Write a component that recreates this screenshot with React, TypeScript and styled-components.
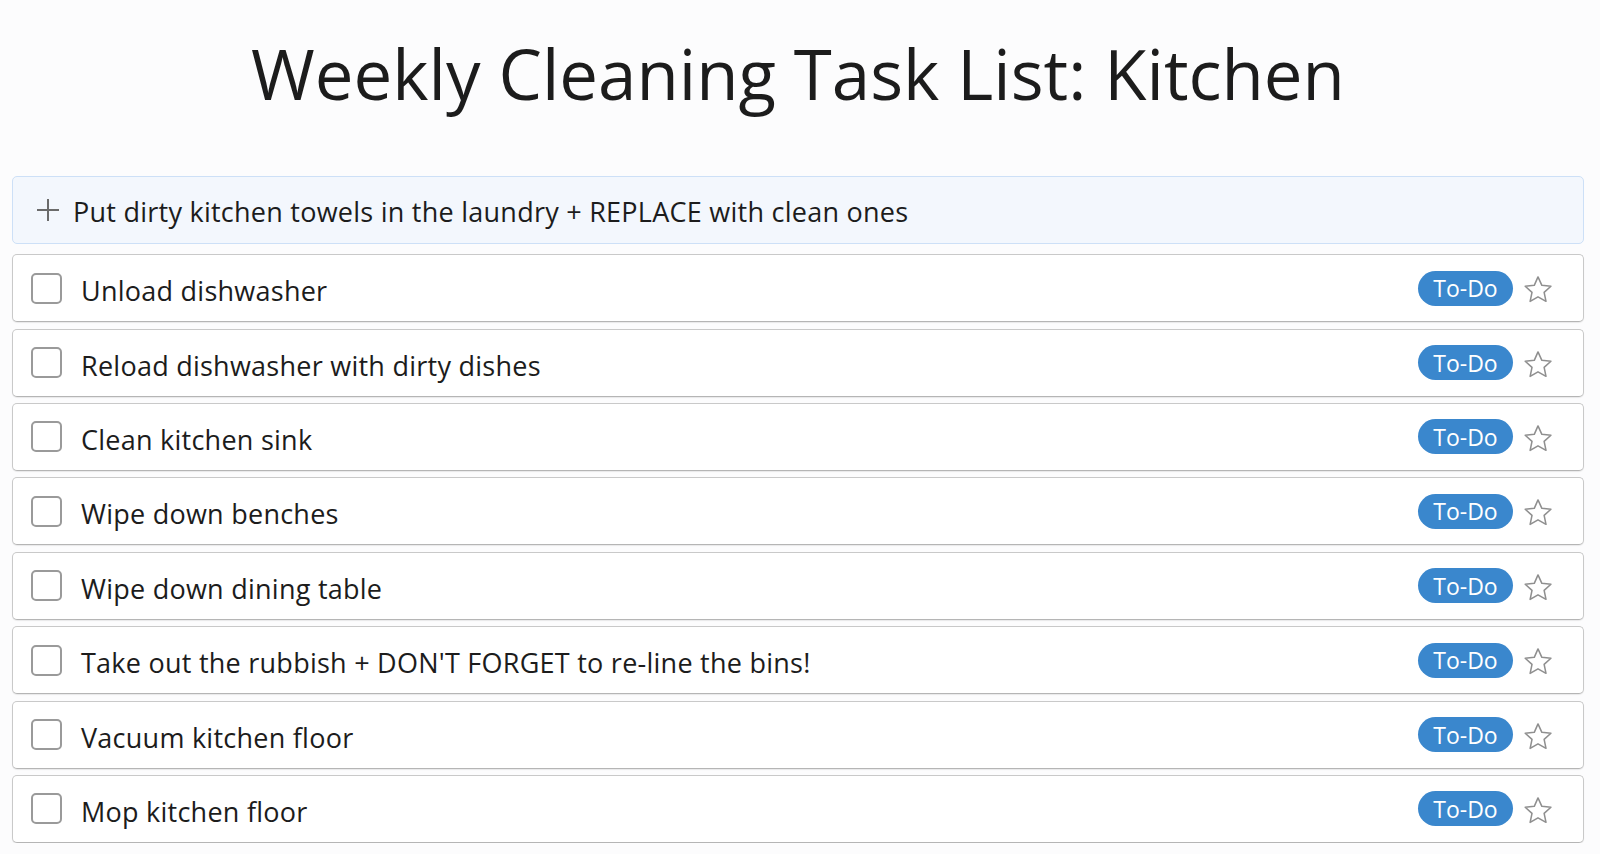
import { createGlobalStyle, styled } from 'styled-components';

const tasks = [
  'Unload dishwasher',
  'Reload dishwasher with dirty dishes',
  'Clean kitchen sink',
  'Wipe down benches',
  'Wipe down dining table',
  "Take out the rubbish + DON'T FORGET to re-line the bins!",
  'Vacuum kitchen floor',
  'Mop kitchen floor',
];

const GlobalStyle = createGlobalStyle`
  html, body {
    margin: 0;
    padding: 0;
    background: #fcfcfd;
    font-family: 'Open Sans', 'Noto Sans', sans-serif;
    color: #1f1f1f;
  }
`;

function PlusIcon() {
  return (
    <svg width="24" height="24" viewBox="0 0 24 24">
      <path d="M12 1v22M1 12h22" stroke="#6b6b6b" strokeWidth="2" fill="none" />
    </svg>
  );
}

function StarIcon() {
  return (
    <svg width="32" height="32" viewBox="0 0 24 24">
      <path
        d="M12 2.2l2.9 6.3 6.8.7-5.1 4.6 1.4 6.7L12 17.1l-5.9 3.4 1.4-6.7-5.1-4.6 6.8-.7z"
        stroke="#8f8f8f"
        strokeWidth="1.15"
        strokeLinejoin="round"
        fill="none"
      />
    </svg>
  );
}

function App() {
  return (
    <>
      <GlobalStyle />
      <Page>
        <Title>Weekly Cleaning Task List: Kitchen</Title>
        <List>
          <AddRow>
            <PlusIcon />
            <AddText>Put dirty kitchen towels in the laundry + REPLACE with clean ones</AddText>
          </AddRow>
          {tasks.map((task) => (
            <TaskRow key={task}>
              <Checkbox />
              <TaskText>{task}</TaskText>
              <Badge>To-Do</Badge>
              <StarButton>
                <StarIcon />
              </StarButton>
            </TaskRow>
          ))}
        </List>
      </Page>
    </>
  );
}

const Page = styled.div`
  padding: 32px 16px 0 12px;
`;

const Title = styled.h1`
  margin: 0 0 61px;
  font-size: 69px;
  font-weight: 400;
  line-height: 1.2;
  text-align: center;
  color: #1c1c1c;
`;

const List = styled.div`
  display: flex;
  flex-direction: column;
  gap: 6.4px;
`;

const AddRow = styled.div`
  box-sizing: border-box;
  height: 68px;
  margin-bottom: 4px;
  display: flex;
  align-items: center;
  gap: 13px;
  padding: 0 0 0 23px;
  background: #f3f7fd;
  border: 1.5px solid #cde0f7;
  border-radius: 5px;
`;

const AddText = styled.span`
  font-size: 27px;
  letter-spacing: 0.25px;
  color: #1c1c1c;
  padding-top: 3px;
`;

const TaskRow = styled.div`
  box-sizing: border-box;
  height: 68px;
  display: flex;
  align-items: center;
  padding: 0 29px 0 18px;
  background: #ffffff;
  border: 1px solid #c9c9c9;
  border-bottom-color: #b5b5b5;
  border-radius: 5px;
  box-shadow: 0 1px 1px rgba(0, 0, 0, 0.08);
`;

const Checkbox = styled.div`
  box-sizing: border-box;
  width: 31px;
  height: 31px;
  flex-shrink: 0;
  border: 2px solid #9a9a9a;
  border-radius: 5px;
  background: #fff;
`;

const TaskText = styled.span`
  flex: 1;
  margin-left: 19px;
  font-size: 27px;
  letter-spacing: 0.25px;
  color: #1c1c1c;
  padding-top: 5px;
`;

const Badge = styled.span`
  display: flex;
  align-items: center;
  justify-content: center;
  width: 95px;
  height: 35px;
  border-radius: 18px;
  background: #3a87cd;
  color: #fff;
  font-size: 23px;
`;

const StarButton = styled.span`
  display: flex;
  margin-left: 9px;
  margin-top: 4px;
`;

export default App;
